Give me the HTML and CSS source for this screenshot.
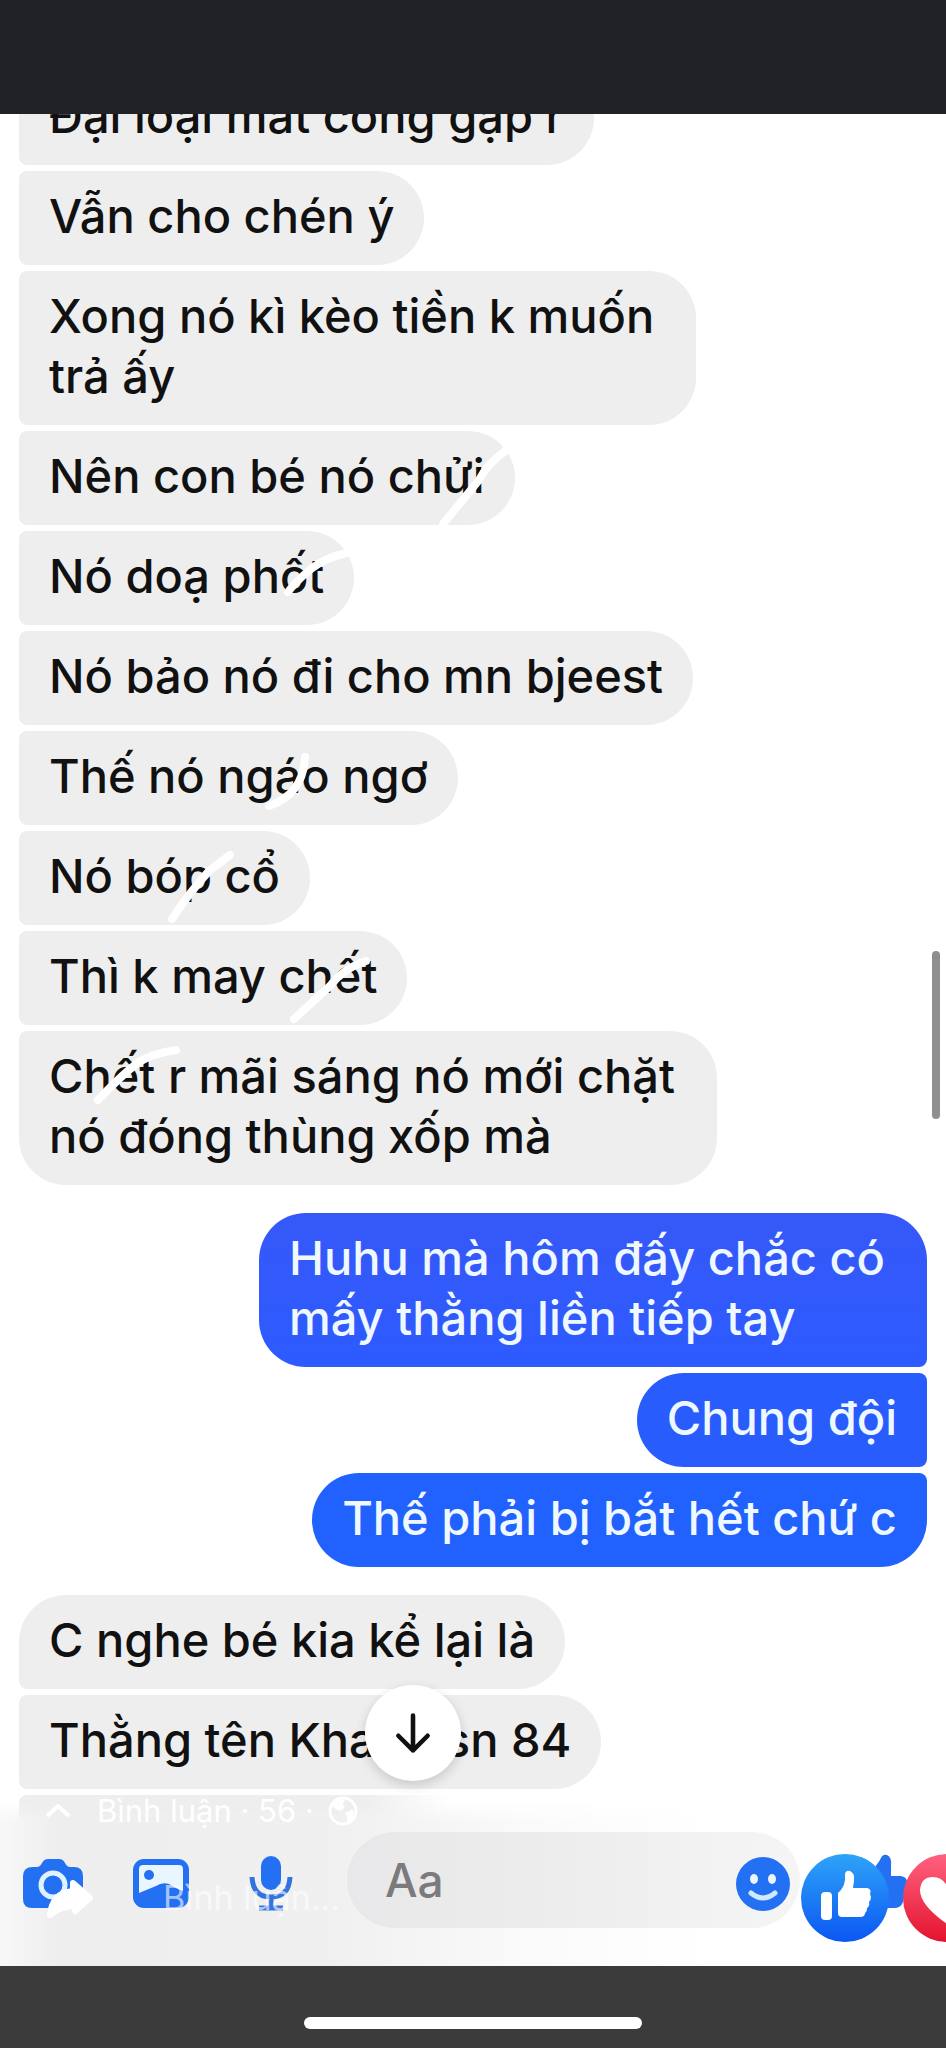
FILE: index.html
```html
<!DOCTYPE html>
<html lang="vi">
<head>
<meta charset="utf-8">
<meta name="viewport" content="width=device-width, initial-scale=1">
<title>Tin nhắn</title>
<link rel="stylesheet" href="styles.css">
</head>
<body>
<div class="app">
  <header class="topbar"></header>
  <main class="thread">
    <section class="group incoming">
      <p class="bubble">Đại loại mất công gặp r</p>
      <p class="bubble">Vẫn cho chén ý</p>
      <p class="bubble multi">Xong nó kì kèo tiền k muốn<br>trả ấy</p>
      <p class="bubble">Nên con bé nó chửi<svg class="scribble" viewBox="0 0 500 100" aria-hidden="true"><path d="M486 20Q469 32 460 49L424 93"/></svg></p>
      <p class="bubble">Nó doạ phốt<svg class="scribble" viewBox="0 0 500 100" aria-hidden="true"><path d="M328 22Q307 26 292 38T269 61"/></svg></p>
      <p class="bubble">Nó bảo nó đi cho mn bjeest</p>
      <p class="bubble">Thế nó ngáo ngơ<svg class="scribble" viewBox="0 0 500 100" aria-hidden="true"><path d="M286 26Q285 45 276 57T250 75"/></svg></p>
      <p class="bubble">Nó bóp cổ<svg class="scribble" viewBox="0 0 500 100" aria-hidden="true"><path d="M211 24L190 40Q170 62 153 88"/></svg></p>
      <p class="bubble">Thì k may chết<svg class="scribble" viewBox="0 0 500 100" aria-hidden="true"><path d="M347 30Q325 37 311 55L275 88"/></svg></p>
      <p class="bubble multi">Chết r mãi sáng nó mới chặt<br>nó đóng thùng xốp mà<svg class="scribble" viewBox="0 0 500 100" aria-hidden="true"><path d="M157 19Q130 23 116 34T79 69"/></svg></p>
    </section>
    <section class="group outgoing">
      <p class="bubble multi">Huhu mà hôm đấy chắc có<br>mấy thằng liền tiếp tay</p>
      <p class="bubble">Chung đội</p>
      <p class="bubble">Thế phải bị bắt hết chứ c</p>
    </section>
    <section class="group incoming latest">
      <p class="bubble">C nghe bé kia kể lại là</p>
      <p class="bubble">Thằng tên Khanh sn 84</p>
      <div class="bubble cut"></div>
    </section>
    <span class="scrollbar"></span>
    <button class="jump" type="button" aria-label="Xuống cuối">
      <svg viewBox="0 0 48 48"><path d="M24 5V43M8 27L24 43L40 27"/></svg>
    </button>
  </main>
  <form class="composer">
    <button class="tool" type="button" aria-label="Máy ảnh">
      <svg viewBox="0 0 60 60"><path class="fill" d="M10 13H14Q17 13 19 9Q21 5 25 5H36Q40 5 42 9Q44 13 47 13H51Q60 13 60 22V45Q60 54 51 54H9Q0 54 0 45V22Q0 13 10 13Z"/><circle class="ring" cx="30" cy="31" r="12"/></svg>
    </button>
    <button class="tool" type="button" aria-label="Ảnh">
      <svg viewBox="0 0 60 60"><rect class="fill" x="2" y="5" width="56" height="49" rx="11"/><path class="pale" d="M12 11H48Q52 11 52 15V37Q44 34 38 30Q31 28 25 32L8 39V15Q8 11 12 11Z"/><circle class="fill" cx="18" cy="21" r="5"/></svg>
    </button>
    <button class="tool" type="button" aria-label="Ghi âm">
      <svg viewBox="0 0 60 60"><rect class="fill" x="22" y="2" width="20" height="34" rx="10"/><path class="line" d="M13 23Q14 43 32 43Q50 43 51 23M32 43V53M20 54H44"/></svg>
    </button>
    <div class="field">
      <input class="text" type="text" placeholder="Aa" aria-label="Tin nhắn">
      <button class="smile" type="button" aria-label="Biểu tượng cảm xúc">
        <svg viewBox="0 0 54 54"><circle class="fill" cx="27" cy="27" r="27"/><ellipse class="pale" cx="18" cy="22" rx="4" ry="5"/><ellipse class="pale" cx="36" cy="22" rx="4" ry="5"/><path class="grin" d="M15 36Q27 46 39 36"/></svg>
      </button>
    </div>
    <button class="tool" type="button" aria-label="Thích">
      <svg viewBox="0 0 60 60"><path class="fill" d="M4 26H18L32 6Q34 0 39 1Q44 3 43 12V22H53Q60 23 59 30L55 48Q53 54 46 54H4Z"/></svg>
    </button>
    <div class="comments">
      <svg class="chevron" viewBox="0 0 26 14"><path d="M2 12L13 2L24 12"/></svg>
      <span>Bình luận · 56 ·</span>
      <svg class="globe" viewBox="0 0 30 30"><circle cx="15" cy="15" r="13"/><path d="M4 10Q9 2 17 4Q13 8 17 11L13 15L7 13ZM17 17L25 13Q28 23 18 27Q21 22 17 17Z"/></svg>
    </div>
    <svg class="share" viewBox="0 0 46 38" aria-hidden="true"><path d="M26 3L43 18L28 31V26Q14 26 3 35Q5 13 26 11Z"/></svg>
    <span class="ghost">Bình luận...</span>
    <div class="reactions">
      <svg viewBox="0 0 88 88"><defs><linearGradient id="like" x2="0" y2="1"><stop stop-color="#2ea3f8"/><stop offset="1" stop-color="#0b57f2"/></linearGradient></defs><circle cx="44" cy="44" r="44" fill="url(#like)"/><rect x="20" y="38" width="11" height="28" rx="4" fill="#fff"/><path fill="#fff" d="M37 39Q43 34 44 26V20Q45 16 49 17Q54 19 53 27L52 34H66Q71 35 69 40L70 43Q70 46 68 48Q69 52 66 54Q66 58 64 59Q64 63 59 63H41Q37 63 37 59Z"/></svg>
      <svg viewBox="0 0 88 88"><defs><linearGradient id="love" x2="0" y2="1"><stop stop-color="#ff6280"/><stop offset="1" stop-color="#e4132f"/></linearGradient></defs><circle cx="44" cy="44" r="44" fill="url(#love)"/><path fill="#fff" d="M44 70Q17 51 17 36Q18 23 30 23Q39 23 44 32Q49 23 58 23Q70 23 71 36Q71 51 44 70Z"/></svg>
    </div>
  </form>
  <footer class="bottombar"><span class="home"></span></footer>
</div>
</body>
</html>
```
FILE: styles.css
```css
* { box-sizing: border-box; }
body {
  margin: 0;
  background: #fff;
  font-family: Inter, "Noto Sans", sans-serif;
}
button { border: 0; padding: 0; background: none; }
svg { display: block; }

.app {
  display: flex;
  flex-direction: column;
  height: 100vh;
  overflow: hidden;
}
.topbar { flex: 0 0 114px; background: #212227; }

.thread {
  position: relative;
  flex: 1;
  min-height: 0;
  display: flex;
  flex-direction: column;
  justify-content: flex-end;
  gap: 28px;
  padding: 0 19px;
  overflow: hidden;
}
.group { display: flex; flex-direction: column; gap: 6px; }
.incoming { align-items: flex-start; }
.outgoing { align-items: flex-end; }

.bubble {
  position: relative;
  margin: 0;
  padding: 15px 30px 19px;
  border-radius: 8px 47px 47px 8px;
  background: #eee;
  color: #111;
  font-size: 47px;
  font-weight: 500;
  line-height: 60px;
  white-space: nowrap;
}
.multi { padding-right: 42px; }
.incoming .bubble:last-child { border-bottom-left-radius: 47px; }
.latest .bubble:first-child { border-top-left-radius: 47px; }
.outgoing .bubble {
  border-radius: 47px 8px 8px 47px;
  background: #295cfd;
  color: #eff8ff;
}
.outgoing .bubble:first-child {
  border-top-right-radius: 47px;
  background: linear-gradient(#3658f8, #2d5bff);
}
.outgoing .bubble:last-child {
  border-bottom-right-radius: 47px;
  background: #2161fd;
}
.latest .cut {
  width: 430px;
  height: 27px;
  padding: 0;
  border-radius: 8px 8px 0 0;
  background: linear-gradient(90deg, #eee 80%, #fff);
}
.latest .bubble.cut { border-bottom-left-radius: 0; }
.scribble {
  position: absolute;
  top: 0;
  left: 0;
  width: 500px;
  height: 100px;
  overflow: visible;
}
.scribble path { fill: none; stroke: #fff; stroke-width: 8; stroke-linecap: round; }

.scrollbar {
  position: absolute;
  top: 837px;
  right: 6px;
  width: 8px;
  height: 168px;
  border-radius: 4px;
  background: #8e8e8e;
}
.jump {
  position: absolute;
  left: 365px;
  bottom: 41px;
  width: 96px;
  height: 96px;
  display: grid;
  place-items: center;
  border-radius: 50%;
  background: #fff;
  box-shadow: 0 4px 12px rgba(0, 0, 0, .16);
}
.jump svg { width: 44px; height: 44px; }
.jump path { fill: none; stroke: #111; stroke-width: 5; stroke-linecap: round; stroke-linejoin: round; }

.composer {
  --haze: linear-gradient(90deg, #f8f8f8, #eeeeef 6%, #f0f0f0 35%, #fafafa 55%, #fff 75%);
  position: relative;
  flex: none;
  display: flex;
  align-items: center;
  gap: 48px;
  padding: 10px 38px 38px 23px;
  background: var(--haze);
}
.composer::before {
  content: "";
  position: absolute;
  left: 0;
  right: 0;
  bottom: 100%;
  height: 20px;
  background: var(--haze);
  -webkit-mask-image: linear-gradient(transparent, #000);
  mask-image: linear-gradient(transparent, #000);
}
.comments {
  position: absolute;
  left: 45px;
  top: -30px;
  display: flex;
  align-items: center;
  gap: 14px;
  color: #fff;
  font-size: 31px;
  line-height: 38px;
}
.chevron { width: 26px; height: 14px; margin-right: 12px; }
.chevron path { fill: none; stroke: #fff; stroke-width: 4; }
.globe { width: 30px; height: 30px; }
.globe circle { fill: none; stroke: #fff; stroke-width: 3; }
.globe path { fill: #fff; }

.tool { flex: 0 0 60px; height: 60px; margin-top: 8px; }
.fill { fill: #2470f2; }
.pale { fill: #e9f5ff; }
.ring { fill: none; stroke: #dff3ff; stroke-width: 5; }
.line { fill: none; stroke: #3273df; stroke-width: 5; }
.field {
  flex: 1;
  min-width: 0;
  display: flex;
  align-items: center;
  height: 96px;
  padding: 0 10px 0 38px;
  border-radius: 48px;
  background: linear-gradient(90deg, #e8e8ea, #ececec 40%, #f5f5f6);
}
.text {
  flex: 1;
  min-width: 0;
  border: 0;
  padding: 0;
  background: none;
  color: #111;
  font: 500 46px/60px Inter, "Noto Sans", sans-serif;
  outline: 0;
}
.text::placeholder { color: #7b7b7d; opacity: 1; }
.smile { width: 54px; height: 54px; margin-top: 8px; }
.grin { fill: none; stroke: #cdeaff; stroke-width: 5; stroke-linecap: round; }
.share { position: absolute; left: 47px; top: 58px; width: 46px; height: 38px; fill: #fff; stroke: #fff; stroke-width: 6; stroke-linejoin: round; }
.ghost {
  position: absolute;
  left: 163px;
  top: 54px;
  color: rgba(255, 255, 255, .6);
  font-size: 34px;
  line-height: 44px;
}
.reactions {
  position: absolute;
  right: -45px;
  top: 32px;
  display: flex;
  gap: 14px;
}
.reactions svg { width: 88px; height: 88px; }

.bottombar {
  flex: 0 0 82px;
  display: flex;
  justify-content: center;
  align-items: flex-end;
  padding-bottom: 19px;
  background: #3b3b3c;
}
.home { width: 338px; height: 12px; border-radius: 6px; background: #fff; }
```
